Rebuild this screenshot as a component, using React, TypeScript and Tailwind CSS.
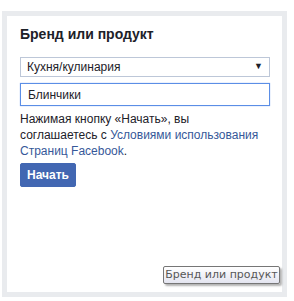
export default function App() {
  return (
    <div className="relative w-[294px] h-[301px] bg-white" style={{ fontFamily: "'Liberation Sans', Arial, sans-serif" }}>
      <div className="absolute left-[2px] top-[11px] w-[285px] h-[286px] border-[5px] border-[#e9ebee] bg-white">
        <div className="flex flex-col pl-[13px] pr-[12px] pt-[9px]">
          <h2 className="text-[14px] leading-[18px] font-bold text-[#1d2129]">Бренд или продукт</h2>
          <div className="mt-[14px] h-[20px] w-[250px] border border-[#bdc7d8] flex items-center justify-between pl-[6px] pr-[6px] text-[12px] text-[#1d2129]">
            <span>Кухня/кулинария</span>
            <span className="text-[9px]">▼</span>
          </div>
          <div className="mt-[6px] h-[23px] w-[250px] border border-[#5b8ee6] shadow-[0_0_1px_#8fb1f0] flex items-center pl-[7px] text-[12px] text-[#1d2129]">
            Блинчики
          </div>
          <p className="mt-[5px] text-[12px] leading-[16px] text-[#1d2129]">
            Нажимая кнопку «Начать», вы
            <br />
            соглашаетесь с <a className="text-[#365899]">Условиями использования</a>
            <br />
            <a className="text-[#365899]">Страниц Facebook</a>.
          </p>
          <button className="mt-[4px] h-[24px] w-[56px] rounded-[2px] border border-[#4267b2] bg-[#4267b2] text-[12px] font-bold text-white">
            Начать
          </button>
        </div>
      </div>
      <div
        className="absolute left-[163px] top-[266px] h-[18px] w-[117px] border border-[#767676] rounded-[2px] bg-gradient-to-b from-white to-[#e4e5f0] shadow-[2px_2px_2px_rgba(0,0,0,0.3)] flex items-center justify-center text-[#575757]"
        style={{ fontFamily: "'DejaVu Sans', sans-serif" }}
      >
        <span className="text-[11px]">Бренд или продукт</span>
      </div>
    </div>
  );
}
